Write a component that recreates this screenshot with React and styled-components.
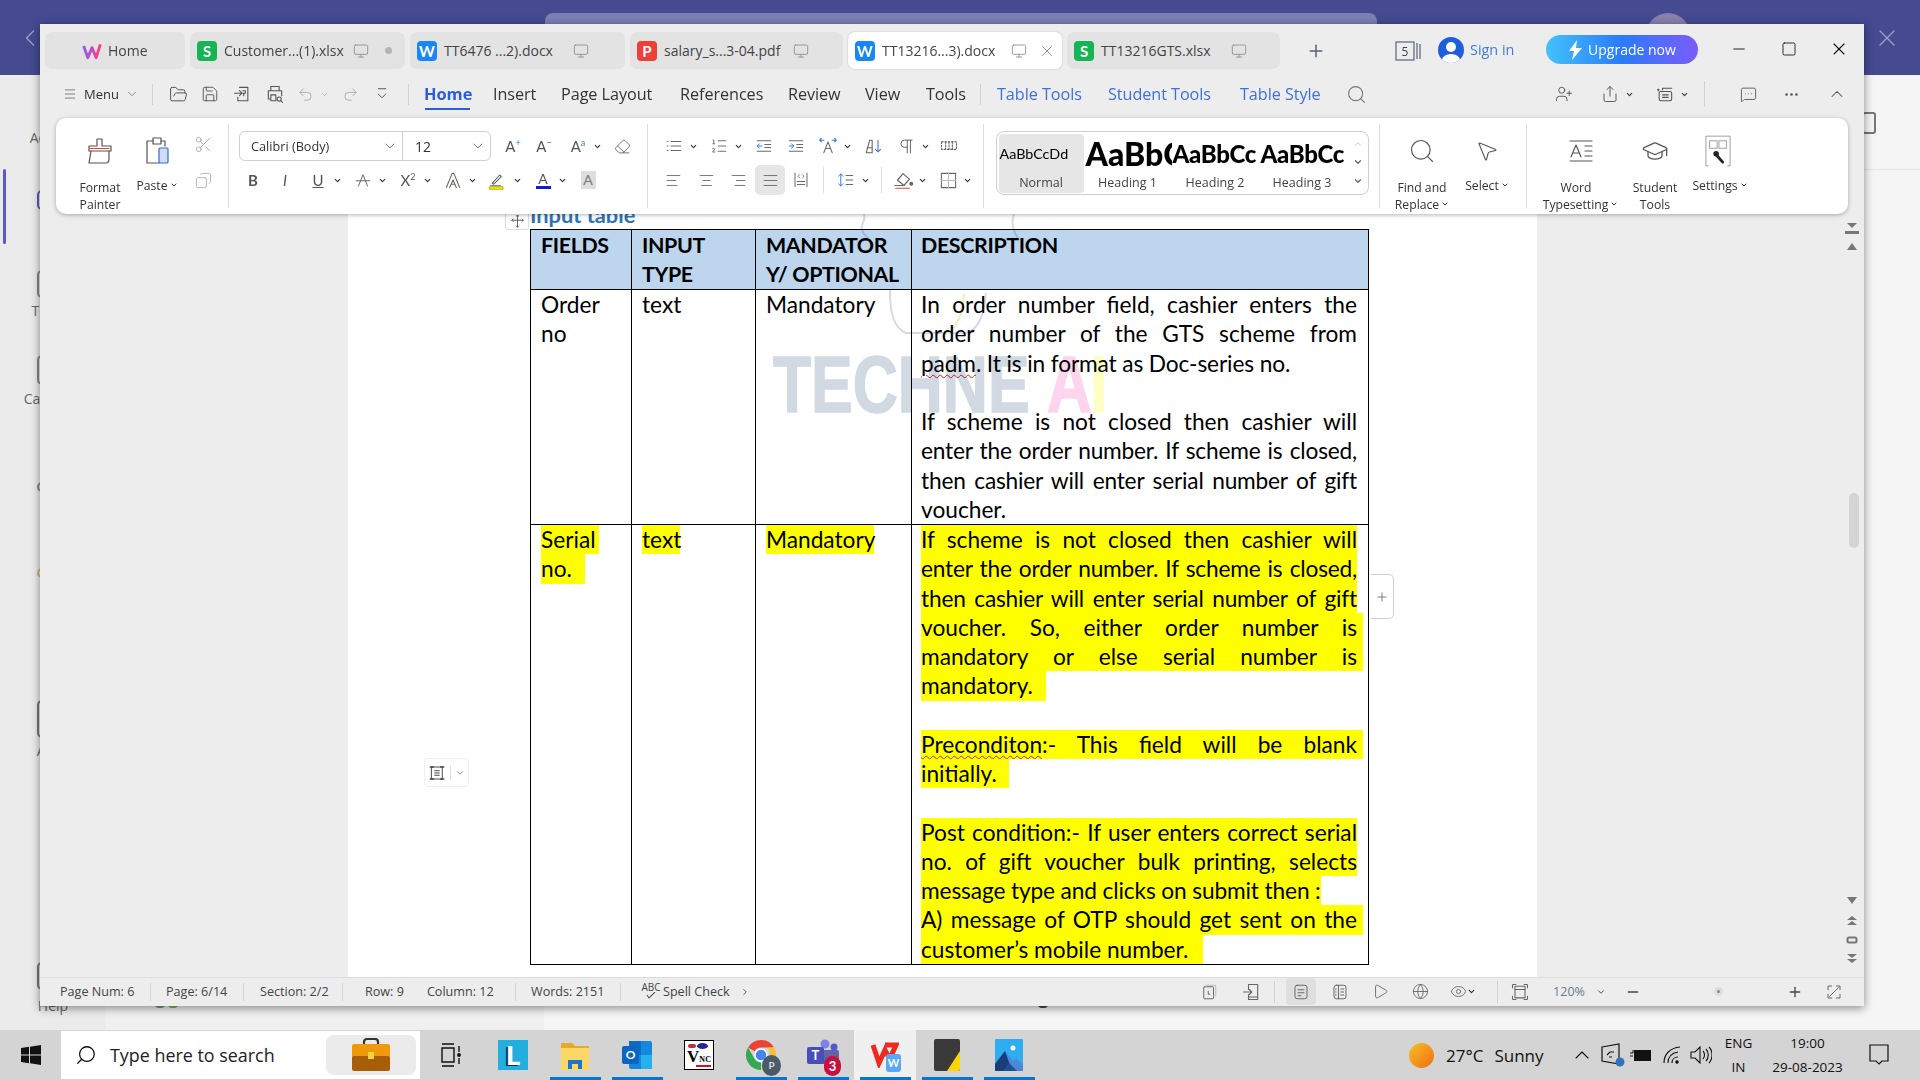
import React from 'react';
import styled, { createGlobalStyle } from 'styled-components';
import {
  Menu, ChevronDown, ChevronUp, ChevronLeft, FolderOpen, Save, Undo2, Redo2, Search, UserPlus, Share,
  MessageSquareMore, Ellipsis, Minus, Plus, X, Square, Monitor, Scissors, Copy, Eraser, ListOrdered,
  AlignLeft, AlignCenter, AlignRight, AlignJustify, Pilcrow, MousePointer2, GraduationCap, Play, Globe, Eye, ChevronRight,
} from 'lucide-react';

const Global = createGlobalStyle`
  html, body { margin: 0; padding: 0; }
  body { font-family: "Open Sans", "Liberation Sans", sans-serif; color: #333; overflow: hidden; }
  * { box-sizing: border-box; }
`;

const LH = '29.25px';

/* ---------- backdrop application ---------- */
const Desktop = styled.div`position: relative; width: 1920px; height: 1080px; overflow: hidden; display: flex; flex-direction: column; background: #f5f5f5;`;
const AppHeader = styled.div`height: 75px; background: #454a91; display: flex; align-items: flex-start; color: #9a9ecb; flex: none;`;
const BackCell = styled.div`width: 60px; height: 75px; display: flex; align-items: center; justify-content: center;`;
const HeaderPill = styled.div`width: 832px; height: 40px; margin: 13px 0 0 485px; background: #7d80b5; border-radius: 8px 8px 0 0;`;
const HeaderAvatar = styled.div`width: 44px; height: 44px; margin: 13px 0 0 269px; border-radius: 50%; background: #8a80b0;`;
const HeaderClose = styled.div`width: 34px; height: 75px; margin-left: 180px; display: flex; align-items: center; justify-content: center;`;
const AppBody = styled.div`flex: 1; display: flex; min-height: 0;`;
const Rail = styled.div`width: 106px; background: #ebebeb; display: flex; flex-direction: column; align-items: center; position: relative;`;
const RailAccent = styled.div`position: absolute; left: 3px; top: 94px; width: 3px; height: 75px; background: #5b5bc4; border-radius: 2px;`;
const RailText = styled.div`font-size: 14px; line-height: 18px; height: 18px; color: #666; margin-top: ${p => p.$mt}px; white-space: nowrap;`;
const RailIcon = styled.div`width: 32px; height: ${p => p.$h}px; margin-top: ${p => p.$mt}px; border: 2px solid ${p => p.$c}; border-radius: 5px; flex: none;`;
const ListPane = styled.div`width: 438px; background: #f0f0f0; position: relative;`;
const MainPane = styled.div`flex: 1; background: #f5f5f5; position: relative;`;
const MainRule = styled.div`position: absolute; right: 0; top: 94px; width: 56px; border-top: 1px solid #e4e4e4;`;
const PopOut = styled.div`position: absolute; right: 44px; top: 37px; width: 14px; height: 22px; border: 2px solid #777; border-radius: 3px;`;
const TinyDot = styled.div`position: absolute; left: ${p => p.$x}px; top: 929px; width: ${p => p.$w}px; height: 4px; border-radius: 0 0 4px 4px; background: ${p => p.$c};`;

/* ---------- window ---------- */
const Win = styled.div`position: absolute; left: 40px; top: 24px; width: 1824px; height: 982px; background: #ededed; box-shadow: 0 2px 9px rgba(0,0,0,.45); display: flex; flex-direction: column; z-index: 2;`;
const TitleRow = styled.div`height: 53px; flex: none; display: flex; align-items: flex-start; padding: 8px 0 0 5px;`;
const Tabs = styled.div`display: flex; gap: 5px;`;
const DocTab = styled.div`width: ${p => p.$w}px; height: 37px; border-radius: 7px; background: ${p => p.$on ? '#fff' : '#e3e3e3'}; box-shadow: ${p => p.$on ? '0 0 2px rgba(0,0,0,.2)' : 'none'};
  display: flex; align-items: center; padding-left: 7px; font-size: 14px; color: #444; white-space: nowrap; justify-content: ${p => p.$center ? 'center' : 'flex-start'};`;
const TabName = styled.span`margin-left: ${p => p.$ml ?? 7}px; width: ${p => p.$w}px; flex: none;`;
const TabGhost = styled.span`color: #8a8a8a; display: flex; align-items: center; justify-content: center; width: 20px; flex: none; margin-left: ${p => p.$ml || 0}px;`;
const TabDot = styled.span`width: 7px; height: 7px; border-radius: 50%; background: #b5b5b5; margin-left: 14px;`;
const AppBadge = styled.span`width: 20px; height: 20px; border-radius: 4px; background: ${p => p.$c}; color: #fff; font: 700 15px/20px "Lato", sans-serif; text-align: center; flex: none;`;
const PlusCell = styled.div`width: 71px; height: 37px; display: flex; align-items: center; justify-content: center; color: #5a6478;`;
const BookIcon = styled.div`width: 26px; margin-left: 44px; height: 37px; display: flex; align-items: center; justify-content: center; color: #5a6478;`;
const Avatar = styled.div`width: 26px; height: 26px; margin: 5px 0 0 17px; border-radius: 50%; background: #1f5fd9; position: relative; overflow: hidden; flex: none;`;
const AvatarHead = styled.div`position: absolute; left: 8px; top: 5px; width: 10px; height: 10px; border-radius: 50%; background: #fff;`;
const AvatarBody = styled.div`position: absolute; left: 4px; top: 17px; width: 18px; height: 12px; border-radius: 50%; background: #fff;`;
const SignIn = styled.div`margin-left: 6px; width: 45px; height: 37px; line-height: 35px; font-size: 14.4px; color: #3f7be0; white-space: nowrap;`;
const Upgrade = styled.div`margin: 3px 0 0 31px; width: 152px; height: 29px; border-radius: 15px; background: linear-gradient(90deg, #43c2fb 0%, #2a7bfb 50%, #7c5cfb 100%); color: #fff;
  font-size: 14px; display: flex; align-items: center; justify-content: center; gap: 5px; white-space: nowrap; flex: none;`;
const WinButtons = styled.div`display: flex; margin-left: 16px;`;
const WinBtn = styled.div`width: 50px; height: 34px; display: flex; align-items: center; justify-content: center; color: #111;`;

const ToolRow = styled.div`height: 41px; flex: none; display: flex; align-items: center; padding: 0 0 7px 22px; position: relative;`;
const QCell = styled.div`width: ${p => p.$w}px; margin-left: ${p => p.$ml || 0}px; flex: none; height: 28px; display: flex; align-items: center; justify-content: center; color: ${p => p.$c || '#555'}; font-size: 13px;`;
const RowSep = styled.div`width: 1px; height: ${p => p.$h || 21}px; background: #d2d2d2; margin-left: ${p => p.$ml || 0}px; flex: none;`;
const RibTab = styled.div`width: ${p => p.$w}px; margin-left: ${p => p.$ml || 0}px; flex: none; font-size: 16.2px; line-height: 28px; white-space: nowrap; color: ${p => p.$blue ? '#3d6fe0' : '#333'}; position: relative; letter-spacing: -.05px;
  font-weight: ${p => p.$on ? 700 : 400}; ${p => p.$on && `color: #2b5be0; font-size: 16.4px; &::after { content: ''; position: absolute; left: 1px; top: 28px; width: 45px; height: 2px; background: #2b5be0; }`}`;

const Ribbon = styled.div`height: 96px; flex: none; margin: 0 16px; background: #fff; border-radius: 10px; box-shadow: 0 1px 4px rgba(0,0,0,.3); display: flex; position: relative; z-index: 3; padding: 6px 0;`;
const RGroup = styled.div`width: ${p => p.$w}px; flex: none; padding-left: ${p => p.$pl || 0}px; display: ${p => p.$col ? 'block' : 'flex'}; border-right: ${p => p.$end ? 'none' : '1px solid #dcdcdc'};`;
const Big = styled.div`width: ${p => p.$w}px; margin-left: ${p => p.$ml || 0}px; flex: none; display: flex; flex-direction: column; align-items: center; font-size: 12.2px; color: #333; line-height: 17px; text-align: center;`;
const BigIcon = styled.div`height: 52px; flex: none; display: flex; align-items: center; justify-content: center; color: #555; padding-top: 2px; padding-left: ${p => p.$pl || 0}px; padding-right: ${p => p.$pr || 0}px;`;
const BigLabel = styled.div`flex: none; white-space: nowrap; margin-top: ${p => p.$second ? 0 : p.$up ? 0.5 : 2.5}px; padding-left: ${p => p.$pl || 0}px; display: flex; align-items: center; justify-content: center; gap: 2px;`;
const SmallCol = styled.div`width: 40px; margin-left: 5px; display: flex; flex-direction: column; align-items: center; color: #b0b0b0; flex: none;`;
const SmallSlot = styled.div`height: 36px; display: flex; align-items: center; justify-content: center; margin-top: ${p => p.$mt || 0}px;`;
const FontRow = styled.div`display: flex; align-items: center; margin-top: 7px; height: 30px;`;
const ToolsRow = styled.div`display: flex; align-items: center; height: 30px; margin-top: ${p => p.$mt || 0}px;`;
const FontBox = styled.div`width: 252px; height: 30px; border: 1px solid #cfcfcf; border-radius: 6px; display: flex; flex: none;`;
const FontName = styled.div`width: 163px; border-right: 1px solid #cfcfcf; padding-left: 11px; display: flex; align-items: center; justify-content: space-between; padding-right: 4px; font-size: 12.7px; color: #333; white-space: nowrap;`;
const FontSize = styled.div`flex: 1; padding: 0 4px 0 12px; display: flex; align-items: center; justify-content: space-between; font-size: 14px;`;
const Tool = styled.div`width: ${p => p.$w || 28}px; height: 30px; margin-left: ${p => p.$ml || 0}px; flex: none; display: flex; align-items: center; justify-content: center; color: #666; border-radius: 5px; background: ${p => p.$on ? '#e6e6e6' : 'transparent'}; font-size: 15px;`;
const Unit = styled.div`width: ${p => p.$w || 45}px; margin-left: ${p => p.$ml || 0}px; flex: none; display: flex; align-items: center;`;
const ChevBox = styled.span`width: 10px; flex: none; display: flex; justify-content: center; color: #333;`;
const GroupSep = styled.div`width: 1px; height: 26px; background: #dcdcdc; margin-left: ${p => p.$ml}px; flex: none;`;
const BoldLetter = styled.span`font-family: "Lato", sans-serif; font-weight: ${p => p.$w || 400}; font-style: ${p => p.$i ? 'italic' : 'normal'}; font-size: 15px; color: #555; text-decoration: ${p => p.$u ? 'underline' : 'none'}; position: relative; line-height: 1;`;
const Over = styled.sup`font-size: 9px; color: ${p => p.$c || '#3b7be0'}; line-height: 0; margin-left: 0;`;
const FillA = styled.span`width: 15px; display: flex; flex-direction: column; align-items: center; font: 14px/15px "Lato", sans-serif; color: #555;`;
const FillBar = styled.span`width: 15px; height: 3px; background: ${p => p.$c}; display: block;`;
const ShadeA = styled.span`width: 15px; height: 18px; background: #dedede; font: 14px/18px "Lato", sans-serif; color: #777; text-align: center; display: block;`;

const Gallery = styled.div`margin: 7px 0 0 0; width: 373px; height: 64px; border: 1.5px solid #cfcfcf; border-radius: 8px; display: flex; padding: 1.5px; overflow: hidden;`;
const StyleCell = styled.div`width: ${p => p.$w}px; flex: none; border-radius: 4px; background: ${p => p.$on ? '#e6e6e6' : 'transparent'}; overflow: hidden; display: flex; flex-direction: column; align-items: center;`;
const StyleSample = styled.div`height: 39px; width: 100%; display: flex; align-items: center; white-space: nowrap; overflow: hidden; padding-left: ${p => p.$pl || 0}px; font-family: "Lato", sans-serif; color: #000; font-size: ${p => p.$s}px; font-weight: ${p => p.$b ? 900 : 400}; letter-spacing: ${p => p.$ls || 0}px;`;
const StyleName = styled.div`font-size: 12.5px; line-height: 20px; color: #444;`;
const GalleryArrows = styled.div`flex: 1; display: flex; flex-direction: column; align-items: center; justify-content: space-around; color: #666; padding: 1px 0 2px 4px;`;

/* ---------- document ---------- */
const DocArea = styled.div`flex: 1; min-height: 0; display: flex; position: relative; overflow: hidden;`;
const Page = styled.div`margin-left: 308px; width: 1189px; background: #fff; overflow: hidden; padding-left: 182px; position: relative; flex: none;`;
const DocHeading = styled.div`margin-top: -14px; height: 29px; font: 700 21.8px/29px "Lato", sans-serif; color: #2e74b5;`;
const Table = styled.table`border-collapse: collapse; table-layout: fixed; width: 838px; font: 400 22.7px/${LH} "Lato", sans-serif; color: #000; position: relative;`;
const Th = styled.th`border: 1px solid #000; background: #bdd6ee; text-align: left; vertical-align: top; font-weight: 700; font-size: 21.4px; padding: 1px 0 0 ${p => p.$pl || 10}px; letter-spacing: -.36px;`;
const Td = styled.td`border: 1px solid #000; vertical-align: top; padding: 0 0 0 ${p => p.$pl || 10}px;`;
const HeadLine = styled.div`white-space: nowrap; height: 29px;`;
const Plain = styled.div`height: ${LH}; white-space: nowrap; ${p => p.$w ? `width:${p.$w}px;` : ''} background: ${p => p.$y ? '#ffff00' : 'transparent'}; letter-spacing: ${p => p.$ls ?? 0}px;`;
const JLine = styled.div`height: ${LH}; width: ${p => p.$w || 436}px; box-sizing: content-box; padding-right: ${p => p.$pad || 0}px; text-align: justify; text-align-last: justify; background: ${p => p.$y ? '#ffff00' : 'transparent'}; letter-spacing: ${p => p.$ls ?? 0}px; overflow: hidden;`;
const Squiggle = styled.span`text-decoration: underline wavy #e02020 1px; text-underline-offset: 2px;`;
const Handle = styled.div`position: absolute; left: 157px; top: -2px; width: 24px; height: 18px; background: #fff; border: 1px solid #ddd; border-radius: 0 0 3px 3px; color: #444; display: flex; align-items: center; justify-content: center; z-index: 2;`;
const Wm = styled.div`position: absolute; left: 425px; top: 131px; font: 700 80px/80px "Liberation Sans", sans-serif; white-space: nowrap; transform: scaleX(.78); transform-origin: left top; mix-blend-mode: multiply; pointer-events: none; color: #d1d9e3; -webkit-text-stroke: 1.5px currentColor; filter: blur(.6px);`;
const WmA = styled.span`color: #ffd4ee; margin-left: 22px;`;
const WmI = styled.span`color: #ffffc4; margin-left: -2px;`;
const WmArt = styled.svg`position: absolute; left: 500px; top: 0; pointer-events: none; mix-blend-mode: multiply;`;
const AddCol = styled.div`position: absolute; left: 1331px; top: 360px; width: 23px; height: 45px; background: #fff; border: 1.5px solid #d0d0d0; border-left: none; border-radius: 0 5px 5px 0; color: #666; display: flex; align-items: center; justify-content: center; z-index: 4;`;
const FitBox = styled.div`position: absolute; left: 384px; top: 544px; width: 45px; height: 29px; background: #fff; border: 1px solid #eee; border-radius: 4px; display: flex; align-items: center; justify-content: center; gap: 4px; color: #444; z-index: 4;`;
const ThinDivide = styled.span`width: 1px; height: 14px; background: #ddd;`;
const ScrollRail = styled.div`position: absolute; right: 0; top: 0; bottom: 0; width: 24px; display: flex; flex-direction: column; align-items: center; color: #777; padding-top: 8px;`;
const ScrollMark = styled.div`height: ${p => p.$h || 14}px; display: flex; align-items: center; justify-content: center; margin-top: ${p => p.$mt || 0}px;`;
const Thumb = styled.div`width: 10px; height: 55px; border-radius: 5px; background: #d4d4d4; margin-top: 241px; margin-left: 3px;`;

const StatusBar = styled.div`height: 29px; flex: none; border-top: 1px solid #dcdcdc; display: flex; align-items: center; font-size: 12.6px; color: #444; background: #ededed; padding-bottom: 1px;`;
const StatCell = styled.div`width: ${p => p.$w}px; padding-left: ${p => p.$pl}px; flex: none; height: 18px; line-height: 18px; white-space: nowrap; border-right: ${p => p.$noBorder ? 'none' : '1px solid #d4d4d4'}; display: flex; align-items: center;`;
const StatGap = styled.span`margin-left: ${p => p.$ml}px; display: flex;`;
const SpellTag = styled.span`display: flex; flex-direction: column; align-items: center; font-size: 10px; line-height: 9px; height: 18px; color: #444; width: 20px;`;
const StatRight = styled.div`margin-left: auto; width: 676px; display: flex; align-items: center; height: 100%; flex: none;`;
const StatIcon = styled.div`width: ${p => p.$w || 40}px; margin-left: ${p => p.$ml || 0}px; height: 100%; display: flex; align-items: center; justify-content: center; color: ${p => p.$c || '#666'}; flex: none; background: ${p => p.$on ? '#dfdfdf' : 'transparent'}; border-radius: 4px; font-size: 12.5px;`;
const SliderDot = styled.div`width: 9px; height: 9px; border: 3px solid #ddd; border-radius: 50%; background: #888; margin-left: 69px; flex: none;`;

/* ---------- taskbar ---------- */
const Taskbar = styled.div`height: 50px; flex: none; background: #d4d4d4; display: flex; align-items: stretch; position: relative; z-index: 3;`;
const StartCell = styled.div`width: 61px; display: flex; align-items: center; justify-content: center; flex: none;`;
const SearchBox = styled.div`width: 359px; background: #fff; margin: 1px 0; display: flex; align-items: center; padding-left: 14px; flex: none; font-size: 17.9px; color: #222;`;
const SearchText = styled.span`margin-left: 13px; white-space: nowrap;`;
const Widget = styled.div`width: 90px; height: 40px; background: #ebebeb; border-radius: 8px; margin-left: auto; margin-right: 4px; display: flex; align-items: center; justify-content: center;`;
const TaskItem = styled.div`width: 62px; flex: none; display: flex; align-items: center; justify-content: center; position: relative; background: ${p => p.$hover ? '#f0f0f0' : 'transparent'};
  ${p => p.$open && `&::after { content: ''; position: absolute; left: 5.5px; right: 5.5px; bottom: 0; height: 3px; background: #0078d4; }`}`;
const Tray = styled.div`margin-left: auto; width: 512px; flex: none; display: flex; align-items: center; color: #111; font-size: 17px; white-space: nowrap;`;
const Sun = styled.div`width: 25px; height: 25px; border-radius: 50%; background: linear-gradient(135deg, #f6c02a, #f26d0e); margin-left: 1px; flex: none;`;
const TrayText = styled.span`margin-left: ${p => p.$ml}px; flex: none;`;
const TrayIcon = styled.div`width: ${p => p.$w}px; margin-left: ${p => p.$ml || 0}px; display: flex; align-items: center; justify-content: center; flex: none;`;
const TrayStack = styled.div`width: ${p => p.$w}px; margin-left: ${p => p.$ml || 0}px; flex: none; text-align: center; font-size: 13.5px; line-height: 24px;`;
const LSquare = styled.div`width: 30px; height: 30px; background: #22aede; color: #fff; font: 900 27px/30px "Lato", sans-serif; text-align: center; text-shadow: -2px 1px 0 #12306e;`;
const VncBox = styled.div`width: 30px; height: 30px; background: #fff; border: 1.5px solid #000; display: flex; justify-content: center; align-items: flex-end; padding-bottom: 5px; color: #000; position: relative;`;
const VncV = styled.span`font: 700 17px/15px "Liberation Serif", serif;`;
const VncNC = styled.span`font: 700 8px/9px "Liberation Serif", serif; align-self: flex-end;`;
const VncRed = styled.div`position: absolute; left: 11px; right: 2px; bottom: 2px; height: 2px; background: #e0101a;`;
const VncEye = styled.div`position: absolute; right: 5px; top: 2px; width: 11px; height: 6px; border-radius: 50%; background: #26269a;`;
const VncDots = styled.div`position: absolute; left: 3px; top: 3px; width: 8px; height: 4px; border-radius: 2px; background: #b33;`;
const TeamsBadge = styled.div`position: absolute; left: 32px; top: 26px; width: 17px; height: 20px; border-radius: 9px; background: #c8103e; color: #fff; font: 700 13px/20px "Lato", sans-serif; text-align: center;`;
const ChromeP = styled.div`position: absolute; left: 32px; top: 25px; width: 19px; height: 21px; border-radius: 50%; background: #4a5a66; color: #ddd; font: 700 10px/21px "Lato", sans-serif; text-align: center;`;
const WpsMini = styled.div`position: absolute; left: 32px; top: 24px; width: 15px; height: 18px; border-radius: 3px; background: #5aa7f5; color: #fff; font: 700 11px/18px "Lato", sans-serif; text-align: center;`;
const OutlookBox = styled.div`width: 30px; height: 30px; position: relative;`;
const OutlookO = styled.div`position: absolute; left: 0; top: 6px; width: 17px; height: 18px; border-radius: 2px; background: #0a66c2; color: #fff; font: 700 12px/18px "Lato", sans-serif; text-align: center;`;
const FlipX = styled.span`display: flex; transform: scaleX(-1);`;

const Svg = ({ s = 20, w, h, vb = '0 0 24 24', sw = 1.3, children }) => (
  <svg width={w || s} height={h || s} viewBox={vb} fill="none" stroke="currentColor" strokeWidth={sw} strokeLinecap="round" strokeLinejoin="round">{children}</svg>
);
const L = { strokeWidth: 1.25 };
const Chev = () => <ChevBox><ChevronDown size={9} strokeWidth={3} /></ChevBox>;
const ThinChev = ({ s = 14 }) => <ChevronDown size={s} strokeWidth={1.4} color="#777" />;
const LabelChev = () => <ChevronDown size={8} strokeWidth={3} />;

const WpsLogo = ({ s = 20 }) => (
  <svg width={s} height={s} viewBox="0 0 24 24" fill="none" strokeWidth="3.4" strokeLinejoin="round">
    <defs><linearGradient id="wl" x1="0" x2="1"><stop offset="0" stopColor="#8d5cf6" /><stop offset="1" stopColor="#ff3b7a" /></linearGradient></defs>
    <path d="M2 6l5 14 5-12 5 12 5-16" stroke="url(#wl)" />
  </svg>
);
const SBadge = () => <AppBadge $c="#17b455">S</AppBadge>;
const WBadge = () => <AppBadge $c="#1a86f5">W</AppBadge>;
const PBadge = () => <AppBadge $c="#ee4036">P</AppBadge>;

const PainterIcon = () => (
  <Svg s={34} vb="0 0 34 34" sw={1.2}>
    <path d="M14 5h5v7h9v5H6v-5h8z" /><path d="M8 17l-2 12h17c2 0 3-2 3-4v-8" />
    <path d="M7 14.5h19" stroke="#d2521d" />
  </Svg>
);
const PasteIcon = () => (
  <Svg s={34} vb="0 0 34 34" sw={1.2}>
    <path d="M13 7H7v22h12" /><path d="M13 4h8v6h-8z" /><path d="M21 7h4v5" />
    <rect x="19" y="14" width="9" height="15" rx="1" stroke="#2f6fde" fill="#cfdcfb" />
  </Svg>
);
const WordTypeIcon = () => (
  <Svg s={30} vb="0 0 30 30" sw={1.2}>
    <path d="M4 5h22M4 25h22M19 10h7M19 15h7M19 20h7" /><path d="M5 21l5-12 5 12M7 17h6" />
  </Svg>
);
const SettingsIcon = () => (
  <svg width="26" height="32" viewBox="0 0 28 34" fill="none" stroke="#999" strokeWidth="1">
    <path d="M4 33H1V1h26v32h-3" /><rect x="5" y="6" width="8" height="8" /><rect x="15" y="6" width="8" height="8" />
    <path d="M12 21l7 8" stroke="#222" strokeWidth="3" strokeLinecap="round" /><circle cx="12" cy="20" r="3" fill="#222" stroke="none" />
  </svg>
);
const PrintPreview = () => (
  <Svg s={20}><path d="M7 8V3h10v5M6 18H4V8h16v6" /><rect x="7" y="13" width="6" height="7" /><circle cx="17" cy="18" r="2.5" /><path d="M19 20l2 2" /></Svg>
);
const ExportDoc = () => (
  <Svg s={20}><path d="M9 4h10v16H7v-4" /><path d="M3 11h9M9 8l3 3-3 3" /><path d="M13 8h3v3h-3M14 11v3" /></Svg>
);
const CustomizeIcon = () => <Svg s={18}><path d="M7 5h10M7 12l5 5 5-5" /></Svg>;
const CollabIcon = () => <Svg s={20}><path d="M5 7H3M4 6v2" /><rect x="5" y="9" width="15" height="11" rx="2" /><path d="M9 7V5h11M9 13h7M9 16h7" /></Svg>;

const DashLines = () => <Svg s={18}><path d="M3 6h1M3 12h1M3 18h1M8 6h13M8 12h13M8 18h13" /></Svg>;
const IndentLeft = () => <Svg s={18}><path d="M3 5h18M3 19h18M13 10h8M13 14h8" /><path d="M9 12H3M6 9l-3 3 3 3" stroke="#3b7be0" /></Svg>;
const IndentRight = () => <Svg s={18}><path d="M3 5h18M3 19h18M13 10h8M13 14h8" /><path d="M3 12h6M6 9l3 3-3 3" stroke="#3b7be0" /></Svg>;
const SpacingA = () => <Svg s={20}><path d="M7 20l5-13 5 13M9 15h6" /><path d="M2 5h5M17 5h5M4 3L2 5l2 2M20 3l2 2-2 2" stroke="#3b7be0" /></Svg>;
const SortIcon = () => <Svg s={20}><path d="M4 20l4-15h3v15M5 14h6M4 20h7" /><path d="M18 5v14M15 16l3 3 3-3" stroke="#3b7be0" /></Svg>;
const GridLines = () => <Svg s={20}><rect x="3" y="7" width="18" height="9" strokeDasharray="2 2" /><path d="M8 7v9M12 7v9M16 7v9" strokeDasharray="2 1.5" /></Svg>;
const Distribute = () => <Svg s={18}><path d="M4 3v18M20 3v18M7 14h10M7 18h10" /><path d="M10 5L8 7l2 2M14 5l2 2-2 2" stroke="#3b7be0" /></Svg>;
const LineSpacing = () => <Svg s={18}><path d="M5 4v16M2 7l3-3 3 3M2 17l3 3 3-3" stroke="#3b7be0" /><path d="M12 6h9M12 12h9M12 18h9" /></Svg>;
const Bucket = () => <Svg s={22}><path d="M6 12l6-7 7 6-6 7z" /><path d="M4 21h15" stroke="#d24a4a" /><path d="M3 18h10" /><circle cx="21" cy="16" r="1.5" fill="currentColor" /></Svg>;
const Borders = () => <Svg s={19}><rect x="3" y="3" width="18" height="18" /><path d="M12 3v18M3 12h18" stroke="#bbb" /></Svg>;
const Highlighter = () => <Svg s={20}><path d="M5 16l9-10 2 2-9 9z" /><path d="M3 19h12" /><path d="M2 20h16v3H2z" fill="#f7e727" stroke="#c9b800" /></Svg>;
const StrikeA = () => <Svg s={18}><path d="M6 20l6-15 6 15" /><path d="M3 13h18" /></Svg>;
const OutlineA = () => <Svg s={20}><path d="M4 21L11 4h2l7 17M8 21l4-9 4 9" /><path d="M10 17h4" stroke="#d2521d" /></Svg>;
const Page2 = () => <Svg s={18}><rect x="5" y="5" width="13" height="16" rx="1" /><path d="M8 5V3h13v14h-3" stroke="#bbb" /><path d="M11 11v4h2" /></Svg>;
const PhoneIn = () => <Svg s={20}><path d="M9 9V3h11v18H9v-6" /><path d="M3 12h10M10 9l3 3-3 3" /><path d="M9 18h11" /></Svg>;
const PageView = () => <Svg s={18}><rect x="4" y="3" width="16" height="18" rx="3" /><path d="M8 9h8M8 13h8M8 17h4" /></Svg>;
const OutlineView = () => <Svg s={18}><rect x="4" y="3" width="16" height="18" rx="3" /><path d="M10 3v18M13 8h4M13 12h4M13 16h4M6 8h1M6 12h1M6 16h1" /></Svg>;
const FitIcon = ({ s = 20 }) => <Svg s={s}><path d="M3 7V4a1 1 0 0 1 1-1h3M17 3h3a1 1 0 0 1 1 1v3M21 17v3a1 1 0 0 1-1 1h-3M7 21H4a1 1 0 0 1-1-1v-3" /><rect x="6" y="5" width="12" height="14" /><path d="M6 9h12" /></Svg>;
const ExpandIcon = () => <Svg s={18}><path d="M4 9V4h5M15 4h5v5M20 15v5h-5M9 20H4v-5M6 18L18 6" /></Svg>;
const CheckMark = () => <svg width="12" height="7" viewBox="0 0 12 7" fill="none" stroke="#555" strokeWidth="1.1"><path d="M2 3l2 3 6-6" /></svg>;

const TriUp = () => <svg width="10" height="7" viewBox="0 0 10 7"><path d="M5 0l5 7H0z" fill="#777" /></svg>;
const TriDown = () => <svg width="10" height="7" viewBox="0 0 10 7"><path d="M5 7L0 0h10z" fill="#777" /></svg>;
const DblUp = () => <svg width="10" height="10" viewBox="0 0 10 10"><path d="M5 0l5 4H0zM5 5l5 4H0z" fill="#777" /></svg>;
const DblDown = () => <svg width="10" height="10" viewBox="0 0 10 10"><path d="M5 4L0 0h10zM5 9L0 5h10z" fill="#777" /></svg>;
const CircleMark = () => <svg width="12" height="8" viewBox="0 0 12 8"><rect x="1.5" y="1.5" width="9" height="5" rx="1.5" fill="none" stroke="#777" strokeWidth="2" /></svg>;
const SplitMark = () => <svg width="14" height="12" viewBox="0 0 14 12"><path d="M7 5L2 0h10z" fill="#777" /><path d="M0 8h14v3H0z" fill="#777" /></svg>;

const Win10 = () => <svg width="20" height="20" viewBox="0 0 20 20" fill="#111"><path d="M0 3l8-1.2V9.5H0zM9 1.7L20 0v9.5H9zM0 10.5h8v7.7L0 17zM9 10.5h11V20L9 18.3z" /></svg>;
const Briefcase = () => (
  <svg width="38" height="34" viewBox="0 0 38 34">
    <path d="M12 8V4a3 3 0 0 1 3-3h8a3 3 0 0 1 3 3v4" fill="none" stroke="#333" strokeWidth="2.2" />
    <rect y="6" width="38" height="14" rx="2" fill="#ee9a0c" /><rect y="18" width="38" height="15" rx="2" fill="#a85e08" />
    <rect x="16" y="14" width="6" height="7" fill="#f5d23c" />
  </svg>
);
const TaskView = () => <svg width="20" height="24" viewBox="0 0 20 24" fill="none" stroke="#111" strokeWidth="1.4"><path d="M1 1h12M1 23h12M1 5h12v14H1zM18 3v6M18 15v6" /><circle cx="18" cy="12" r="1.2" fill="#111" /></svg>;
const FolderTile = () => (
  <svg width="28" height="30" viewBox="0 0 28 30">
    <path d="M0 3h11l3 3h14v24H0z" fill="#e9a925" /><path d="M0 8h28v22H0z" fill="#fcd765" />
    <path d="M7 29v-9h14v9h-4v-5h-6v5z" fill="#1b77c9" />
  </svg>
);
const OutlookBack = () => <svg width="30" height="30" viewBox="0 0 30 30"><rect x="7" y="1" width="23" height="28" rx="2" fill="#1289dc" /><path d="M7 1h12v14H7z" fill="#0f6cbd" /><path d="M19 15h11v14H19z" fill="#26b0ee" /></svg>;
const ChromeIcon = () => (
  <svg width="32" height="32" viewBox="0 0 32 32">
    <path d="M16 1a15 15 0 0 1 13 7.5H16a7.5 7.5 0 0 0-6.5 3.8L3 8.5A15 15 0 0 1 16 1z" fill="#ea4335" />
    <path d="M29 8.5A15 15 0 0 1 16 31l6.5-11.3a7.5 7.5 0 0 0 0-11.2z" fill="#fbc02d" />
    <path d="M16 31A15 15 0 0 1 3 8.5l6.5 11.3a7.5 7.5 0 0 0 6.5 3.7z" fill="#34a853" />
    <circle cx="16" cy="16" r="6" fill="#4285f4" stroke="#fff" strokeWidth="1.5" />
  </svg>
);
const TeamsIcon = () => (
  <svg width="32" height="32" viewBox="0 0 32 32">
    <circle cx="18" cy="5" r="4.5" fill="#7b83eb" /><circle cx="27" cy="8" r="3.5" fill="#5059c9" />
    <rect x="14" y="11" width="18" height="14" rx="2" fill="#6264a7" /><rect y="8" width="17" height="17" rx="2" fill="#464eb8" />
    <text x="8.5" y="21" textAnchor="middle" fontFamily="Lato" fontWeight="700" fontSize="13" fill="#fff">T</text>
  </svg>
);
const WpsTask = () => <svg width="28" height="26" viewBox="0 0 28 26" fill="none" stroke="#ee2a1c" strokeWidth="5" strokeLinejoin="miter"><path d="M2 3l6 18 6-13 5 10M14 3h11l-5 11" /></svg>;
const Sticky = () => <svg width="26" height="32" viewBox="0 0 26 32"><rect width="26" height="32" rx="2" fill="#3a3a3a" /><path d="M26 12v18a2 2 0 0 1-2 2H13z" fill="#ffd400" /></svg>;
const Photos = () => (
  <svg width="28" height="32" viewBox="0 0 28 32">
    <rect width="28" height="32" rx="1" fill="#2eaef0" /><circle cx="18" cy="9" r="2.5" fill="#fff" />
    <path d="M0 25l10-13 8 10 3-3 7 7v6H0z" fill="#4f86d9" /><path d="M0 32V25l10-13 7 20z" fill="#163e7a" /><path d="M8 32l6-8 8 8z" fill="#1c4f96" />
  </svg>
);
const TrayChev = () => <Svg s={18} sw={1.5}><path d="M4 16l8-8 8 8" /></Svg>;
const SyncIcon = () => <svg width="26" height="26" viewBox="0 0 26 26" fill="none" stroke="#111" strokeWidth="1.2"><path d="M2 5l17-3v20L2 19z" /><path d="M7 13l3-3h4M12 15H9" /><circle cx="20" cy="20" r="4.5" fill="#2f74c0" stroke="none" /></svg>;
const BatteryIcon = () => <svg width="22" height="14" viewBox="0 0 22 14"><path d="M0 5h3V2M3 8H0" stroke="#111" fill="none" /><rect x="4" y="2" width="17" height="11" fill="#111" /></svg>;
const WifiIcon = () => <svg width="20" height="18" viewBox="0 0 20 18" fill="none" stroke="#111" strokeWidth="1.1"><path d="M2 17C2 8 8 2 18 1M6 17c0-6 4-10 10-11M10 17c0-3 2-6 6-6" /><circle cx="15" cy="16" r="1.2" fill="#111" /></svg>;
const VolumeIcon = () => <svg width="22" height="18" viewBox="0 0 22 18" fill="none" stroke="#111" strokeWidth="1.1"><path d="M1 6h4l5-5v16l-5-5H1zM13 5c2 2 2 6 0 8M16 3c3 3 3 9 0 12M19 1c4 4 4 12 0 16" /></svg>;
const Bubble = () => <svg width="20" height="22" viewBox="0 0 20 22" fill="none" stroke="#111" strokeWidth="1.2"><path d="M1 1h18v16h-6l-3 3-3-3H1z" /></svg>;
const BookFive = () => <svg width="26" height="20" viewBox="0 0 26 20" fill="none" stroke="#5a6478" strokeWidth="1.2"><rect x="1" y="1" width="18" height="18" /><path d="M22 2v16M25 3v15" /><text x="10" y="15" textAnchor="middle" fontSize="12" fill="#444" stroke="none" fontFamily="Open Sans">5</text></svg>;
const Bolt = () => <svg width="15" height="20" viewBox="0 0 15 20" fill="#fff"><path d="M9 0L1 11h5l-2 9 10-12H8z" /></svg>;
const MoveHandle = () => <Svg s={15}><path d="M12 3v18M3 10h18M5 8l-2 2 2 2M19 8l2 2-2 2M10 19l2 2 2-2M10 3h4" /></Svg>;
const FitBtn = () => <Svg s={18}><rect x="5" y="4" width="14" height="16" /><path d="M9 9h6M9 12h6M9 15h6" /><path d="M3 4h4M17 4h4M3 20h4M17 20h4" strokeWidth="2" /></Svg>;

export default function App() {
  return (
    <Desktop>
      <Global />
      <AppHeader>
        <BackCell><ChevronLeft size={28} strokeWidth={1.2} /></BackCell>
        <HeaderPill />
        <HeaderAvatar />
        <HeaderClose><X size={28} strokeWidth={1.2} /></HeaderClose>
      </AppHeader>
      <AppBody>
        <Rail>
          <RailAccent />
          <RailText $mt={54}>Activity</RailText>
          <RailIcon $mt={43} $h={20} $c="#5b5bc4" />
          <RailIcon $mt={60} $h={28} $c="#888" />
          <RailText $mt={4}>Teams</RailText>
          <RailIcon $mt={35} $h={30} $c="#888" />
          <RailText $mt={5}>Calendar</RailText>
          <RailIcon $mt={74} $h={10} $c="#888" />
          <RailIcon $mt={76} $h={10} $c="#d9b56b" />
          <RailIcon $mt={122} $h={38} $c="#777" />
          <RailText $mt={4}>Apps</RailText>
          <RailIcon $mt={202} $h={28} $c="#777" />
          <RailText $mt={7}>Help</RailText>
        </Rail>
        <ListPane>
          <TinyDot $x={49} $w={10} $c="#888" />
          <TinyDot $x={62} $w={10} $c="#7ab648" />
        </ListPane>
        <MainPane>
          <TinyDot $x={494} $w={10} $c="#444" />
          <MainRule />
          <PopOut />
        </MainPane>
      </AppBody>
      <Taskbar>
        <StartCell><Win10 /></StartCell>
        <SearchBox>
          <FlipX><Search size={22} strokeWidth={1.4} color="#111" /></FlipX>
          <SearchText>Type here to search</SearchText>
          <Widget><Briefcase /></Widget>
        </SearchBox>
        <TaskItem><TaskView /></TaskItem>
        <TaskItem><LSquare>L</LSquare></TaskItem>
        <TaskItem $open><FolderTile /></TaskItem>
        <TaskItem $open><OutlookBox><OutlookBack /><OutlookO>O</OutlookO></OutlookBox></TaskItem>
        <TaskItem><VncBox><VncDots /><VncEye /><VncV>V</VncV><VncNC>NC</VncNC><VncRed /></VncBox></TaskItem>
        <TaskItem $open><ChromeIcon /><ChromeP>P</ChromeP></TaskItem>
        <TaskItem $open><TeamsIcon /><TeamsBadge>3</TeamsBadge></TaskItem>
        <TaskItem $open $hover><WpsTask /><WpsMini>W</WpsMini></TaskItem>
        <TaskItem $open><Sticky /></TaskItem>
        <TaskItem $open><Photos /></TaskItem>
        <Tray>
          <Sun />
          <TrayText $ml={12}>27°C</TrayText>
          <TrayText $ml={11}>Sunny</TrayText>
          <TrayIcon $w={20} $ml={28}><TrayChev /></TrayIcon>
          <TrayIcon $w={28} $ml={7}><SyncIcon /></TrayIcon>
          <TrayIcon $w={28}><BatteryIcon /></TrayIcon>
          <TrayIcon $w={30} $ml={2}><WifiIcon /></TrayIcon>
          <TrayIcon $w={28}><VolumeIcon /></TrayIcon>
          <TrayStack $w={40} $ml={4}>ENG<br />IN</TrayStack>
          <TrayStack $w={92} $ml={3}>19:00<br />29-08-2023</TrayStack>
          <TrayIcon $w={30} $ml={10}><Bubble /></TrayIcon>
        </Tray>
      </Taskbar>

      <Win>
        <TitleRow>
          <Tabs>
            <DocTab $w={140} $center><WpsLogo /><TabName $w={47} $ml={6}>Home</TabName></DocTab>
            <DocTab $w={215}><SBadge /><TabName $w={127}>Customer...(1).xlsx</TabName><TabGhost><Monitor size={16} {...L} /></TabGhost><TabDot /></DocTab>
            <DocTab $w={215}><WBadge /><TabName $w={127}>TT6476 ...2).docx</TabName><TabGhost><Monitor size={16} {...L} /></TabGhost></DocTab>
            <DocTab $w={213}><PBadge /><TabName $w={127}>salary_s...3-04.pdf</TabName><TabGhost><Monitor size={16} {...L} /></TabGhost></DocTab>
            <DocTab $w={214} $on><WBadge /><TabName $w={127}>TT13216...3).docx</TabName><TabGhost><Monitor size={16} {...L} /></TabGhost><TabGhost $ml={8}><X size={18} {...L} /></TabGhost></DocTab>
            <DocTab $w={213}><SBadge /><TabName $w={128}>TT13216GTS.xlsx</TabName><TabGhost $ml={0}><Monitor size={16} {...L} /></TabGhost></DocTab>
          </Tabs>
          <PlusCell><Plus size={20} strokeWidth={1.8} /></PlusCell>
          <BookIcon><BookFive /></BookIcon>
          <Avatar><AvatarHead /><AvatarBody /></Avatar>
          <SignIn>Sign in</SignIn>
          <Upgrade><Bolt />Upgrade now</Upgrade>
          <WinButtons>
            <WinBtn><Minus size={18} strokeWidth={1.2} /></WinBtn>
            <WinBtn><Square size={16} strokeWidth={1.3} /></WinBtn>
            <WinBtn><X size={20} strokeWidth={1.3} /></WinBtn>
          </WinButtons>
        </TitleRow>

        <ToolRow>
          <QCell $w={16}><Menu size={14} {...L} /></QCell>
          <QCell $w={33} $ml={7} $c="#333">Menu</QCell>
          <QCell $w={20} $ml={4}><ThinChev /></QCell>
          <RowSep $ml={10} />
          <QCell $w={32} $ml={9}><FolderOpen size={19} {...L} /></QCell>
          <QCell $w={32}><Save size={18} {...L} /></QCell>
          <QCell $w={32}><ExportDoc /></QCell>
          <QCell $w={33}><PrintPreview /></QCell>
          <QCell $w={28} $c="#aaa"><Undo2 size={17} {...L} /></QCell>
          <QCell $w={10} $c="#aaa"><ChevronDown size={9} strokeWidth={2} /></QCell>
          <QCell $w={28} $ml={7} $c="#aaa"><Redo2 size={17} {...L} /></QCell>
          <QCell $w={32} $ml={2}><CustomizeIcon /></QCell>
          <RowSep $ml={10} />
          <RibTab $w={69} $ml={15} $on>Home</RibTab>
          <RibTab $w={68}>Insert</RibTab>
          <RibTab $w={119}>Page Layout</RibTab>
          <RibTab $w={108}>References</RibTab>
          <RibTab $w={77}>Review</RibTab>
          <RibTab $w={61}>View</RibTab>
          <RibTab $w={54}>Tools</RibTab>
          <RowSep />
          <RibTab $w={111} $ml={16} $blue>Table Tools</RibTab>
          <RibTab $w={132} $blue>Student Tools</RibTab>
          <RibTab $w={101} $blue>Table Style</RibTab>
          <QCell $w={30} $c="#777"><Search size={21} {...L} /></QCell>
          <QCell $w={28} $ml={179}><UserPlus size={18} {...L} /></QCell>
          <QCell $w={28} $ml={18}><Share size={18} {...L} /></QCell>
          <QCell $w={10} $c="#333"><ChevronDown size={9} strokeWidth={2.8} /></QCell>
          <QCell $w={28} $ml={17}><CollabIcon /></QCell>
          <QCell $w={10} $c="#333"><ChevronDown size={9} strokeWidth={2.8} /></QCell>
          <RowSep $ml={15} $h={26} />
          <QCell $w={28} $ml={29}><MessageSquareMore size={17} {...L} /></QCell>
          <QCell $w={28} $ml={15}><Ellipsis size={17} strokeWidth={1.8} /></QCell>
          <QCell $w={28} $ml={18}><ChevronUp size={20} {...L} /></QCell>
        </ToolRow>

        <Ribbon>
          <RGroup $w={173} $pl={8}>
            <Big $w={72}>
              <BigIcon><PainterIcon /></BigIcon>
              <BigLabel>Format</BigLabel>
              <BigLabel $second>Painter</BigLabel>
            </Big>
            <Big $w={42}>
              <BigIcon><PasteIcon /></BigIcon>
              <BigLabel $up>Paste<LabelChev /></BigLabel>
            </Big>
            <SmallCol>
              <SmallSlot $mt={2}><Scissors size={19} {...L} /></SmallSlot>
              <SmallSlot><FlipX><Copy size={17} {...L} /></FlipX></SmallSlot>
            </SmallCol>
          </RGroup>

          <RGroup $w={419} $pl={10} $col>
            <FontRow>
              <FontBox>
                <FontName>Calibri (Body)<ThinChev s={16} /></FontName>
                <FontSize>12<ThinChev s={16} /></FontSize>
              </FontBox>
              <Tool $ml={8}><BoldLetter>A<Over>+</Over></BoldLetter></Tool>
              <Tool $ml={3}><BoldLetter>A<Over $c="#555">−</Over></BoldLetter></Tool>
              <Unit $w={38} $ml={6}><Tool><BoldLetter>A<Over $c="#3b7be0">a</Over></BoldLetter></Tool><Chev /></Unit>
              <Tool $ml={6}><Eraser size={17} {...L} /></Tool>
            </FontRow>
            <ToolsRow $mt={4}>
              <Tool><BoldLetter $w={700}>B</BoldLetter></Tool>
              <Tool $ml={4}><BoldLetter $i>I</BoldLetter></Tool>
              <Unit $ml={5}><Tool><BoldLetter $u>U</BoldLetter></Tool><Chev /></Unit>
              <Unit><Tool><StrikeA /></Tool><Chev /></Unit>
              <Unit><Tool><BoldLetter>X<Over $c="#555">2</Over></BoldLetter></Tool><Chev /></Unit>
              <Unit><Tool><OutlineA /></Tool><Chev /></Unit>
              <Unit><Tool><Highlighter /></Tool><Chev /></Unit>
              <Unit><Tool><FillA>A<FillBar $c="#1515e0" /></FillA></Tool><Chev /></Unit>
              <Tool><ShadeA>A</ShadeA></Tool>
            </ToolsRow>
          </RGroup>

          <RGroup $w={336} $pl={12} $col>
            <ToolsRow $mt={7}>
              <Unit><Tool><DashLines /></Tool><Chev /></Unit>
              <Unit><Tool><ListOrdered size={18} {...L} /></Tool><Chev /></Unit>
              <Tool><IndentLeft /></Tool>
              <Tool $ml={4}><IndentRight /></Tool>
              <Unit $ml={4}><Tool><SpacingA /></Tool><Chev /></Unit>
              <Tool><SortIcon /></Tool>
              <Unit $w={43} $ml={5}><Tool><Pilcrow size={19} {...L} /></Tool><Chev /></Unit>
              <Tool><GridLines /></Tool>
            </ToolsRow>
            <ToolsRow $mt={4}>
              <Tool $ml={-1}><AlignLeft size={17} {...L} /></Tool>
              <Tool $ml={5}><AlignCenter size={17} {...L} /></Tool>
              <Tool $ml={4}><AlignRight size={17} {...L} /></Tool>
              <Tool $w={30} $ml={3} $on><AlignJustify size={17} {...L} /></Tool>
              <Tool $ml={2}><Distribute /></Tool>
              <GroupSep $ml={8} />
              <Unit $w={38} $ml={8}><Tool><LineSpacing /></Tool><Chev /></Unit>
              <GroupSep $ml={11} />
              <Unit $w={38} $ml={7}><Tool><Bucket /></Tool><Chev /></Unit>
              <Unit $w={38} $ml={7}><Tool><Borders /></Tool><Chev /></Unit>
            </ToolsRow>
          </RGroup>

          <RGroup $w={396} $pl={12}>
            <Gallery>
              <StyleCell $w={85} $on>
                <StyleSample $s={14.3} $pl={1}>AaBbCcDd</StyleSample>
                <StyleName>Normal</StyleName>
              </StyleCell>
              <StyleCell $w={88}>
                <StyleSample $s={32} $b $pl={2}>AaBbCc</StyleSample>
                <StyleName>Heading 1</StyleName>
              </StyleCell>
              <StyleCell $w={87}>
                <StyleSample $s={24} $b $ls={-.3} $pl={1}>AaBbCc</StyleSample>
                <StyleName>Heading 2</StyleName>
              </StyleCell>
              <StyleCell $w={87}>
                <StyleSample $s={24} $b $ls={-.3} $pl={2}>AaBbCc</StyleSample>
                <StyleName>Heading 3</StyleName>
              </StyleCell>
              <GalleryArrows>
                <ChevronUp size={10} strokeWidth={2} color="#bbb" />
                <ChevronDown size={10} strokeWidth={3} />
                <ChevronDown size={10} strokeWidth={3} />
              </GalleryArrows>
            </Gallery>
          </RGroup>

          <RGroup $w={147} $pl={10}>
            <Big $w={64}>
              <BigIcon><Search size={28} strokeWidth={1} /></BigIcon>
              <BigLabel>Find and</BigLabel>
              <BigLabel $second>Replace<LabelChev /></BigLabel>
            </Big>
            <Big $w={60} $ml={3}>
              <BigIcon><MousePointer2 size={24} strokeWidth={1.1} /></BigIcon>
              <BigLabel $up>Select<LabelChev /></BigLabel>
            </Big>
          </RGroup>

          <RGroup $w={240} $pl={9} $end>
            <Big $w={80}>
              <BigIcon $pl={10}><WordTypeIcon /></BigIcon>
              <BigLabel>Word</BigLabel>
              <BigLabel $second $pl={9}>Typesetting<LabelChev /></BigLabel>
            </Big>
            <Big $w={70} $ml={4}>
              <BigIcon><GraduationCap size={28} strokeWidth={1.1} /></BigIcon>
              <BigLabel>Student</BigLabel>
              <BigLabel $second>Tools</BigLabel>
            </Big>
            <Big $w={60}>
              <BigIcon $pr={4}><SettingsIcon /></BigIcon>
              <BigLabel $up>Settings<LabelChev /></BigLabel>
            </Big>
          </RGroup>
        </Ribbon>

        <DocArea>
          <Page>
            <DocHeading>Input table</DocHeading>
            <Handle><MoveHandle /></Handle>
            <Table>
              <colgroup>
                <col width="101" /><col width="124" /><col width="156" /><col width="457" />
              </colgroup>
              <thead>
                <tr>
                  <Th><HeadLine>FIELDS</HeadLine></Th>
                  <Th><HeadLine>INPUT</HeadLine><HeadLine>TYPE</HeadLine></Th>
                  <Th><HeadLine>MANDATOR</HeadLine><HeadLine>Y/ OPTIONAL</HeadLine></Th>
                  <Th $pl={9}><HeadLine>DESCRIPTION</HeadLine></Th>
                </tr>
              </thead>
              <tbody>
                <tr>
                  <Td><Plain>Order</Plain><Plain>no</Plain></Td>
                  <Td><Plain>text</Plain></Td>
                  <Td><Plain>Mandatory</Plain></Td>
                  <Td $pl={9}>
                    <JLine>In order number field, cashier enters the</JLine>
                    <JLine>order number of the GTS scheme from</JLine>
                    <Plain $ls={-.12}><Squiggle>padm</Squiggle>. It is in format as Doc-series no.</Plain>
                    <Plain />
                    <JLine>If scheme is not closed then cashier will</JLine>
                    <JLine $ls={-.2}>enter the order number. If scheme is closed,</JLine>
                    <JLine $ls={-.2}>then cashier will enter serial number of gift</JLine>
                    <Plain>voucher.</Plain>
                  </Td>
                </tr>
                <tr>
                  <Td>
                    <Plain $y $w={58}>Serial</Plain>
                    <Plain $y $w={44}>no.</Plain>
                  </Td>
                  <Td><Plain $y $w={38}>text</Plain></Td>
                  <Td><Plain $y $w={108}>Mandatory</Plain></Td>
                  <Td $pl={9}>
                    <JLine $y>If scheme is not closed then cashier will</JLine>
                    <JLine $y $ls={-.2}>enter the order number. If scheme is closed,</JLine>
                    <JLine $y $ls={-.2}>then cashier will enter serial number of gift</JLine>
                    <JLine $y $pad={6}>voucher. So, either order number is</JLine>
                    <JLine $y $pad={6}>mandatory or else serial number is</JLine>
                    <Plain $y $w={125}>mandatory.</Plain>
                    <Plain />
                    <JLine $y $pad={6}><Squiggle>Preconditon</Squiggle>:- This field will be blank</JLine>
                    <Plain $y $w={88}>initially.</Plain>
                    <Plain />
                    <JLine $y>Post condition:- If user enters correct serial</JLine>
                    <JLine $y>no. of gift voucher bulk printing, selects</JLine>
                    <Plain $y $w={400} $ls={-.13}>message type and clicks on submit then :</Plain>
                    <JLine $y $pad={6}>A) message of OTP should get sent on the</JLine>
                    <Plain $y $w={282}>customer’s mobile number.</Plain>
                  </Td>
                </tr>
              </tbody>
            </Table>
            <WmArt width="240" height="130" viewBox="0 0 240 130" fill="none" stroke="#d9d9e6" strokeWidth="2">
              <path d="M16 0c2 8-4 10-2 16 1 4 4 6 6 8M166 0c-2 8-2 10 0 16 1 4 2 6 4 8" />
              <path d="M42 76c0 24 4 38 16 43h60c14-4 18-20 20-40" />
              <path d="M96 120c6 0 18-10 20-40" stroke="#f5ecb0" />
            </WmArt>
            <Wm>TECHNE<WmA>A</WmA><WmI>I</WmI></Wm>
          </Page>
          <AddCol><Plus size={14} strokeWidth={1.4} /></AddCol>
          <FitBox><FitBtn /><ThinDivide /><ChevronDown size={10} strokeWidth={1.4} /></FitBox>
          <ScrollRail>
            <ScrollMark $h={14}><SplitMark /></ScrollMark>
            <ScrollMark $mt={4} $h={12}><TriUp /></ScrollMark>
            <Thumb />
            <ScrollMark $mt={345}><TriDown /></ScrollMark>
            <ScrollMark $mt={7}><DblUp /></ScrollMark>
            <ScrollMark $mt={5}><CircleMark /></ScrollMark>
            <ScrollMark $mt={5}><DblDown /></ScrollMark>
          </ScrollRail>
        </DocArea>

        <StatusBar>
          <StatCell $w={111} $pl={20}>Page Num: 6</StatCell>
          <StatCell $w={93} $pl={15}>Page: 6/14</StatCell>
          <StatCell $w={99} $pl={16}>Section: 2/2</StatCell>
          <StatCell $w={173} $pl={22}>Row: 9<StatGap $ml={23}>Column: 12</StatGap></StatCell>
          <StatCell $w={105} $pl={15}>Words: 2151</StatCell>
          <StatCell $w={130} $pl={20} $noBorder>
            <SpellTag>ABC<CheckMark /></SpellTag>
            <StatGap $ml={2}>Spell Check</StatGap>
            <StatGap $ml={10}><ChevronRight size={10} strokeWidth={2} /></StatGap>
          </StatCell>
          <StatRight>
            <StatIcon $w={42}><Page2 /></StatIcon>
            <StatIcon $w={42}><PhoneIn /></StatIcon>
            <RowSep $ml={2} $h={22} />
            <StatIcon $w={30} $ml={11} $on><PageView /></StatIcon>
            <StatIcon $ml={4}><OutlineView /></StatIcon>
            <StatIcon><Play size={17} {...L} /></StatIcon>
            <StatIcon><Globe size={17} {...L} /></StatIcon>
            <StatIcon $ml={4} $w={38}><Eye size={17} {...L} /><ChevronDown size={9} strokeWidth={3} color="#333" /></StatIcon>
            <RowSep $ml={15} $h={22} />
            <StatIcon $ml={2}><FitIcon /></StatIcon>
            <StatIcon $w={44} $ml={7} $c="#6b7a90">120%</StatIcon>
            <StatIcon $w={16} $ml={2}><ChevronDown size={10} strokeWidth={2.4} color="#555" /></StatIcon>
            <StatIcon $w={24} $ml={12}><Minus size={16} strokeWidth={2} color="#444" /></StatIcon>
            <SliderDot />
            <StatIcon $w={24} $ml={60}><Plus size={16} strokeWidth={2} color="#444" /></StatIcon>
            <StatIcon $w={26} $ml={14}><ExpandIcon /></StatIcon>
          </StatRight>
        </StatusBar>
      </Win>
    </Desktop>
  );
}
